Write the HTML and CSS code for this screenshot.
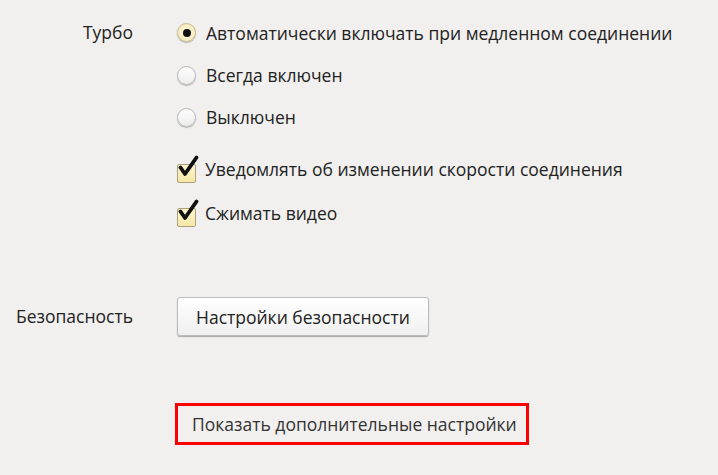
FILE: index.html
```html
<!DOCTYPE html>
<html lang="ru">
<head>
<meta charset="utf-8">
<link rel="stylesheet" href="styles.css">
</head>
<body>
<div class="page">
  <section class="row turbo">
    <div class="label">Турбо</div>
    <div class="content">
      <div class="opt r1"><span class="radio checked"></span><span>Автоматически включать при медленном соединении</span></div>
      <div class="opt r2"><span class="radio"></span><span>Всегда включен</span></div>
      <div class="opt r3"><span class="radio"></span><span>Выключен</span></div>
      <div class="opt c1"><span class="check"><svg width="26" height="26" viewBox="0 0 26 26"><path d="M4.5 12.5 L9 19 L20.5 2.5" fill="none" stroke="#111" stroke-width="3.8" stroke-linecap="round" stroke-linejoin="round"/></svg></span><span>Уведомлять об изменении скорости соединения</span></div>
      <div class="opt c2"><span class="check"><svg width="26" height="26" viewBox="0 0 26 26"><path d="M4.5 12.5 L9 19 L20.5 2.5" fill="none" stroke="#111" stroke-width="3.8" stroke-linecap="round" stroke-linejoin="round"/></svg></span><span>Сжимать видео</span></div>
    </div>
  </section>
  <section class="row security">
    <div class="label">Безопасность</div>
    <div class="content">
      <button class="btn">Настройки безопасности</button>
    </div>
  </section>
  <section class="row more">
    <div class="label"></div>
    <div class="content">
      <div class="more-box">Показать дополнительные настройки</div>
    </div>
  </section>
</div>
</body>
</html>
```

FILE: styles.css
```css
html, body {
  margin: 0;
  padding: 0;
  background: #f1f0ee;
}
body {
  font-family: "Open Sans", "Noto Sans", sans-serif;
  font-size: 17.5px;
  color: #222;
  width: 718px;
  height: 475px;
  overflow: hidden;
}
.page {
  padding-top: 11px;
}
.row {
  display: grid;
  grid-template-columns: 133px 1fr;
  column-gap: 44px;
}
.label {
  text-align: right;
}
.turbo .label {
  line-height: 43px;
  height: 43px;
}
.content {
  display: flex;
  flex-direction: column;
}
.opt {
  display: flex;
  align-items: center;
  height: 42px;
  gap: 11px;
}
.r1 { height: 43px; }
.c1 { margin-top: 10px; }
.c2 { margin-top: 2px; }
.radio {
  flex: none;
  width: 17px;
  height: 17px;
  border-radius: 50%;
  border: 1px solid #b9b9b9;
  background: linear-gradient(#ffffff, #ececec);
  box-shadow: 0 1px 1px rgba(0,0,0,0.25);
  position: relative;
  margin-left: 0;
  margin-right: -1px;
}
.radio.checked {
  border-color: #c6bc8e;
  background: radial-gradient(circle, #fff9df 0%, #f3e6b0 100%);
}
.radio.checked::after {
  content: "";
  position: absolute;
  left: 4.5px;
  top: 4.5px;
  width: 8px;
  height: 8px;
  border-radius: 50%;
  background: #111;
}
.check {
  flex: none;
  width: 17px;
  height: 17px;
  border: 1px solid #aaa27c;
  border-radius: 2px;
  background: linear-gradient(#fff6cf, #f6e7a6);
  position: relative;
  margin-top: 8px;
  margin-right: -2px;
}
.check svg {
  position: absolute;
  left: -2px;
  top: -10px;
}
.security {
  margin-top: 63px;
}
.security .label {
  line-height: 39px;
}
.btn {
  align-self: flex-start;
  font: inherit;
  color: #222;
  height: 39px;
  padding: 0 18px;
  border: 1px solid #bcbcbc;
  border-radius: 3px;
  background: linear-gradient(#ffffff, #f0f0f0);
  box-shadow: 0 1px 1px rgba(0,0,0,0.3);
}
.more {
  margin-top: 67px;
}
.more-box {
  align-self: flex-start;
  margin-left: -2px;
  box-sizing: border-box;
  width: 354px;
  height: 42px;
  border: 3px solid #f00;
  padding-left: 14px;
  line-height: 36px;
  color: #333;
}
```
